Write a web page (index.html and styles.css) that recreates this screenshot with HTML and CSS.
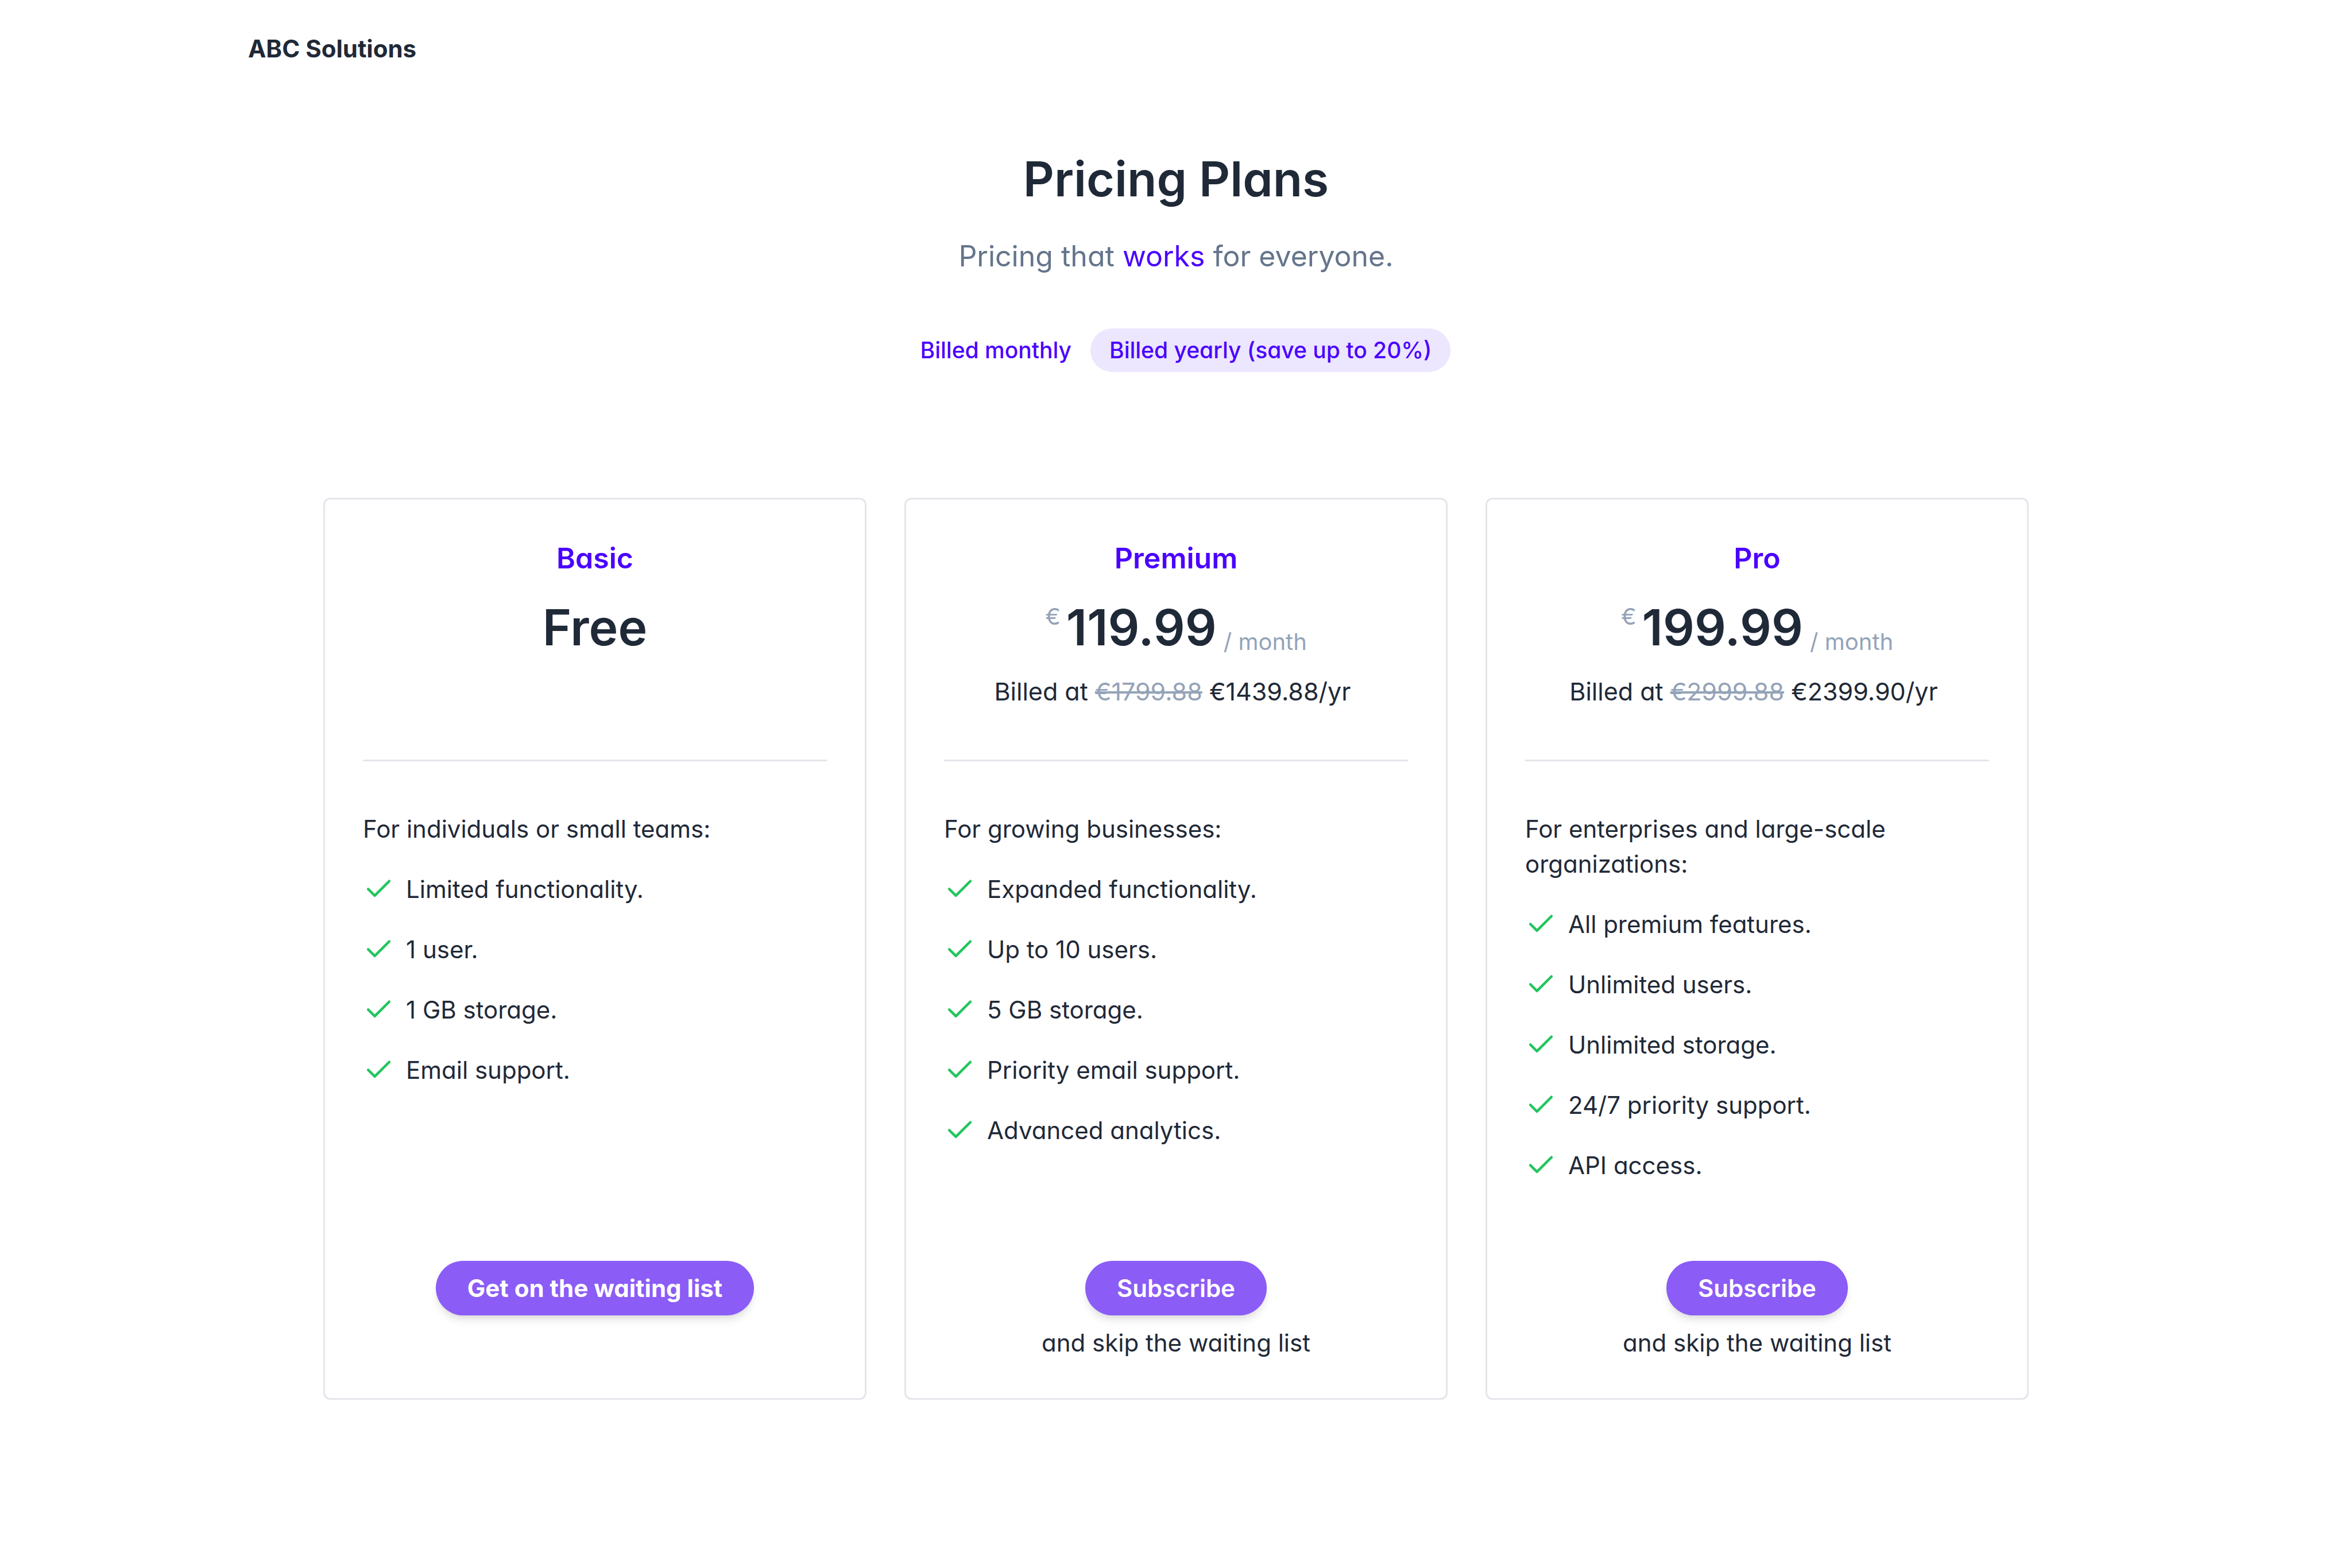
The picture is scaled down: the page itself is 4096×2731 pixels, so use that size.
FILE: index.html
```html
<!DOCTYPE html>
<html lang="en">
<head>
  <meta charset="utf-8">
  <meta name="viewport" content="width=device-width, initial-scale=1">
  <title>Pricing Plans - ABC Solutions</title>
  <link rel="stylesheet" href="styles.css">
</head>
<body>
  <svg class="sprite" aria-hidden="true">
    <symbol id="check" viewBox="0 0 24 24">
      <path d="M20 6 9 17l-5-5" fill="none" stroke="currentColor" stroke-width="2" stroke-linecap="round" stroke-linejoin="round"/>
    </symbol>
  </svg>

  <header class="site-header">
    <a class="brand" href="#">ABC Solutions</a>
  </header>

  <main class="pricing">
    <h1 class="title">Pricing Plans</h1>
    <p class="subtitle">Pricing that <span class="accent">works</span> for everyone.</p>

    <div class="billing" role="group" aria-label="Billing period">
      <button class="billing-option" type="button" aria-pressed="false">Billed monthly</button>
      <button class="billing-option is-active" type="button" aria-pressed="true">Billed yearly (save up to 20%)</button>
    </div>

    <div class="plans">
      <section class="plan">
        <div class="plan-head">
          <h2 class="plan-name">Basic</h2>
          <p class="price"><span class="amount">Free</span></p>
        </div>
        <div class="plan-body">
          <p>For individuals or small teams:</p>
          <ul class="features">
            <li><svg class="check"><use href="#check"/></svg>Limited functionality.</li>
            <li><svg class="check"><use href="#check"/></svg>1 user.</li>
            <li><svg class="check"><use href="#check"/></svg>1 GB storage.</li>
            <li><svg class="check"><use href="#check"/></svg>Email support.</li>
          </ul>
        </div>
        <div class="plan-foot">
          <button class="cta cta-strong" type="button">Get on the waiting list</button>
        </div>
      </section>

      <section class="plan">
        <div class="plan-head">
          <h2 class="plan-name">Premium</h2>
          <p class="price"><span class="currency">€</span><span class="amount">119.99</span><span class="period">/ month</span></p>
          <p class="billed">Billed at <s>€1799.88</s> €1439.88/yr&nbsp;</p>
        </div>
        <div class="plan-body">
          <p>For growing businesses:</p>
          <ul class="features">
            <li><svg class="check"><use href="#check"/></svg>Expanded functionality.</li>
            <li><svg class="check"><use href="#check"/></svg>Up to 10 users.</li>
            <li><svg class="check"><use href="#check"/></svg>5 GB storage.</li>
            <li><svg class="check"><use href="#check"/></svg>Priority email support.</li>
            <li><svg class="check"><use href="#check"/></svg>Advanced analytics.</li>
          </ul>
        </div>
        <div class="plan-foot">
          <button class="cta" type="button">Subscribe</button>
          <p>and skip the waiting list</p>
        </div>
      </section>

      <section class="plan">
        <div class="plan-head">
          <h2 class="plan-name">Pro</h2>
          <p class="price"><span class="currency">€</span><span class="amount">199.99</span><span class="period">/ month</span></p>
          <p class="billed">Billed at <s>€2999.88</s> €2399.90/yr&nbsp;</p>
        </div>
        <div class="plan-body">
          <p>For enterprises and large-scale organizations:</p>
          <ul class="features">
            <li><svg class="check"><use href="#check"/></svg>All premium features.</li>
            <li><svg class="check"><use href="#check"/></svg>Unlimited users.</li>
            <li><svg class="check"><use href="#check"/></svg>Unlimited storage.</li>
            <li><svg class="check"><use href="#check"/></svg>24/7 priority support.</li>
            <li><svg class="check"><use href="#check"/></svg>API access.</li>
          </ul>
        </div>
        <div class="plan-foot">
          <button class="cta" type="button">Subscribe</button>
          <p>and skip the waiting list</p>
        </div>
      </section>
    </div>
  </main>
</body>
</html>
```
FILE: styles.css
```css
:root {
  --text: #1f2937;
  --primary: #4a00ff;
  --primary-soft: #ece6ff;
  --button: #8b5cf6;
  --muted: #94a3b8;
  --subtle: #64748b;
  --line: #e5e6eb;
  --success: #22c55e;
}

* {
  box-sizing: border-box;
  margin: 0;
}

body {
  background: #fff;
  color: var(--text);
  font: 400 42px/61px Inter, "Liberation Sans", sans-serif;
  /* single-storey "a" */
  font-feature-settings: "cv11";
}

button {
  border: 0;
  border-radius: 999px;
  font-family: inherit;
  font-feature-settings: inherit;
  cursor: pointer;
}

.sprite {
  display: none;
}

.site-header {
  max-width: 3232px;
  margin: 0 auto;
  padding: 57px 0 55px;
}

.brand {
  display: block;
  width: fit-content;
  color: inherit;
  font-size: 42px;
  font-weight: 700;
  line-height: 56px;
  text-decoration: none;
}

.pricing {
  display: flex;
  flex-direction: column;
  align-items: center;
  padding: 96px 66px;
}

.title {
  font-size: 84px;
  font-weight: 600;
  line-height: 96px;
}

.subtitle {
  margin-top: 50px;
  color: var(--subtle);
  font-size: 50px;
  line-height: 72px;
}

.accent {
  color: var(--primary);
}

.billing {
  display: flex;
  margin-top: 90px;
}

.billing-option {
  padding: 0 33px;
  background: transparent;
  color: var(--primary);
  font-size: 39px;
  font-weight: 500;
  line-height: 76px;
}

.billing-option.is-active {
  background: var(--primary-soft);
}

.plans {
  display: grid;
  grid-template-columns: repeat(3, 1fr);
  grid-template-rows: auto auto auto;
  column-gap: 66px;
  width: 100%;
  max-width: 2970px;
  margin-top: 219px;
}

/* Each card shares the row heights of its neighbours */
.plan {
  display: grid;
  grid-row: span 3;
  grid-template-rows: subgrid;
  padding: 66px;
  border: 3px solid var(--line);
  border-radius: 12px;
}

.plan-head {
  padding-bottom: 88px;
  border-bottom: 3px solid var(--line);
  text-align: center;
}

.plan-name {
  color: var(--primary);
  font-size: 50px;
  font-weight: 600;
  line-height: 72px;
}

.price {
  display: flex;
  justify-content: center;
  margin-top: 37px;
}

.amount {
  font-size: 86px;
  font-weight: 600;
  line-height: 96px;
}

.currency,
.period {
  color: var(--muted);
  font-size: 40px;
}

.currency {
  margin-right: 10px;
  line-height: 58px;
}

.period {
  align-self: flex-end;
  margin-left: 12px;
  line-height: 46px;
}

.billed {
  margin-top: 33px;
  font-size: 43px;
}

.billed s {
  color: var(--muted);
  text-decoration-thickness: 4px;
}

.plan-body {
  padding: 87px 0 136px;
}

.features {
  display: grid;
  gap: 44px;
  margin-top: 44px;
  padding: 0;
  list-style: none;
}

.features li {
  display: flex;
  align-items: center;
  gap: 20px;
}

.check {
  flex: none;
  width: 55px;
  height: 55px;
  color: var(--success);
}

.plan-foot {
  display: flex;
  flex-direction: column;
  align-items: center;
  gap: 17px;
}

.cta {
  padding: 0 55px;
  background: var(--button);
  box-shadow: 0 11px 16px -3px rgb(0 0 0 / 10%), 0 5px 11px -5px rgb(0 0 0 / 10%);
  color: #fff;
  font-size: 42px;
  font-weight: 600;
  line-height: 95px;
}

.cta-strong {
  font-weight: 700;
}

@media (max-width: 2400px) {
  .plans {
    grid-template-columns: 1fr;
    grid-template-rows: none;
    row-gap: 66px;
  }

  .plan {
    grid-row: auto;
    grid-template-rows: auto;
  }
}
```
